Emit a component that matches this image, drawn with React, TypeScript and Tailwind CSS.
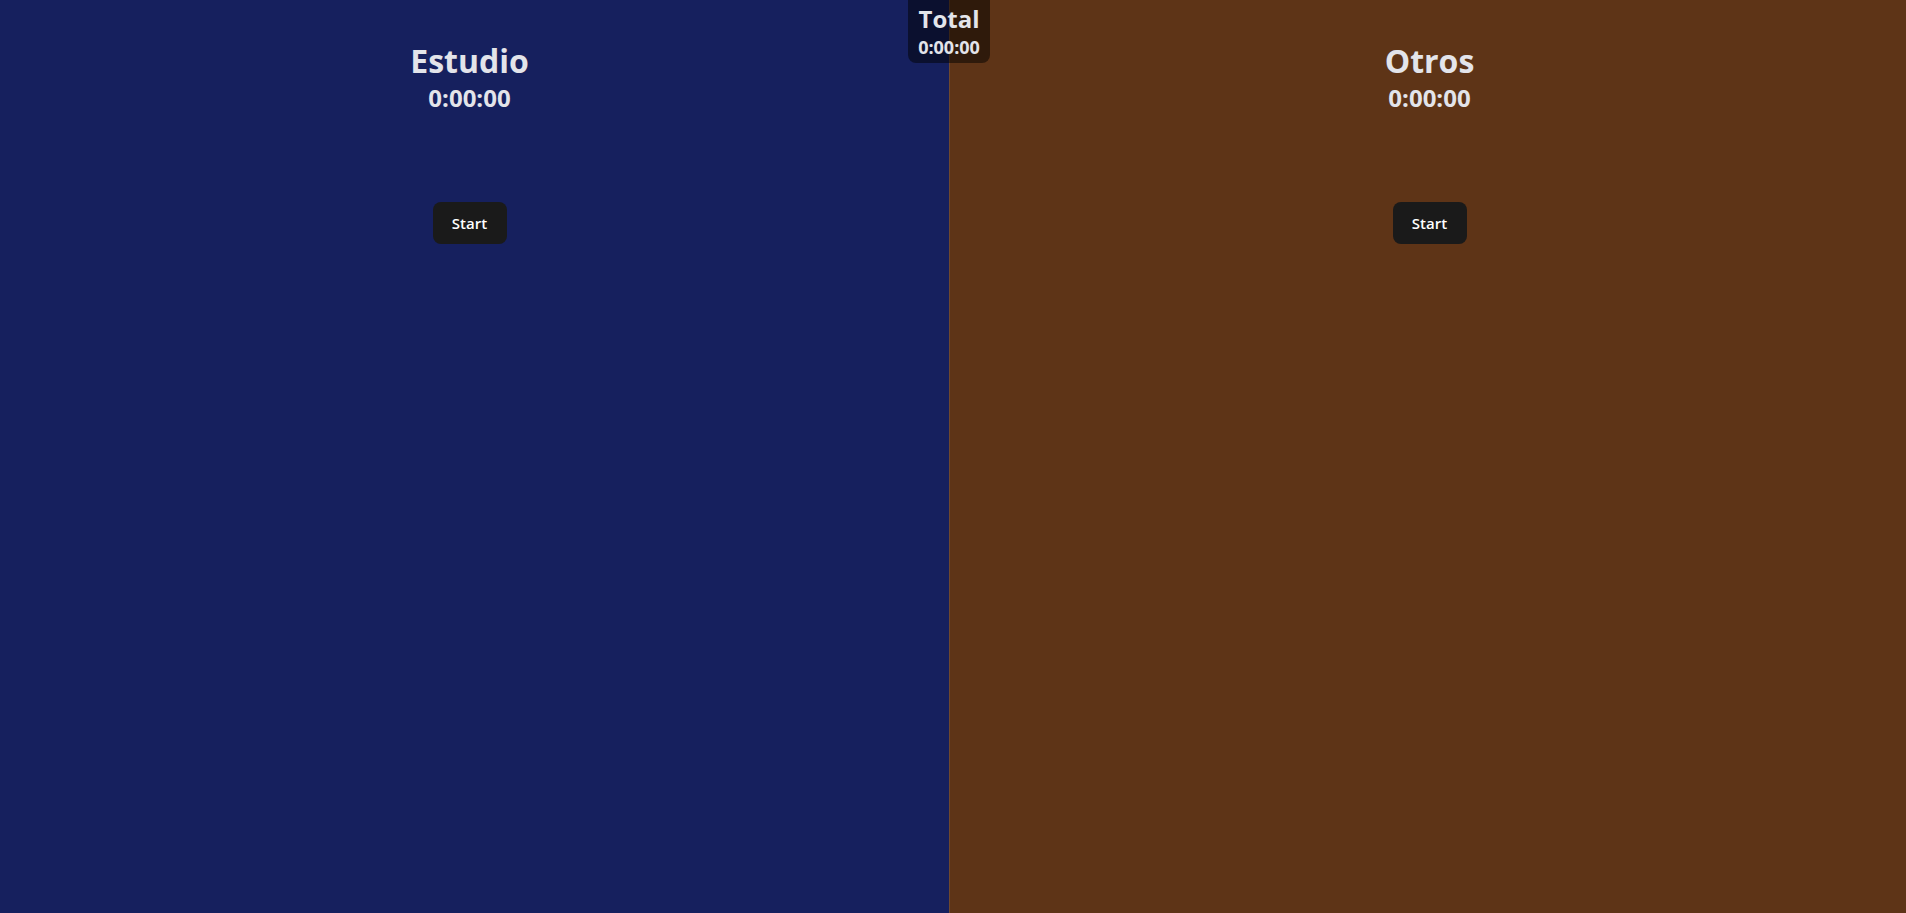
import { useEffect, useState } from "react";

const fmt = (s: number) => {
  const h = Math.floor(s / 3600);
  const m = Math.floor((s % 3600) / 60);
  const sec = s % 60;
  return `${h}:${String(m).padStart(2, "0")}:${String(sec).padStart(2, "0")}`;
};

function Panel({
  title,
  seconds,
  running,
  onToggle,
  className,
}: {
  title: string;
  seconds: number;
  running: boolean;
  onToggle: () => void;
  className: string;
}) {
  return (
    <section className={className}>
      <div className="flex flex-col items-center">
        <h1 className="text-[32px] font-bold leading-[40px]">{title}</h1>
        <h2 className="text-[24px] font-bold leading-[33px]">{fmt(seconds)}</h2>
        <button
          onClick={onToggle}
          className="mt-[88px] h-[42px] w-[74px] rounded-lg bg-[#1a1a1a] text-[15px] font-semibold text-white"
        >
          {running ? "Stop" : "Start"}
        </button>
      </div>
    </section>
  );
}

export default function App() {
  const [study, setStudy] = useState(0);
  const [other, setOther] = useState(0);
  const [active, setActive] = useState<"study" | "other" | null>(null);

  useEffect(() => {
    if (!active) return;
    const id = setInterval(() => {
      if (active === "study") setStudy((s) => s + 1);
      else setOther((s) => s + 1);
    }, 1000);
    return () => clearInterval(id);
  }, [active]);

  const toggle = (k: "study" | "other") => setActive((a) => (a === k ? null : k));

  return (
    <div className="relative flex h-screen w-full text-[#e3e4ea] [font-family:'Open_Sans',sans-serif]">
      <Panel
        title="Estudio"
        seconds={study}
        running={active === "study"}
        onToggle={() => toggle("study")}
        className="w-[949px] bg-[#16205e] pr-[10px] pt-[41px]"
      />
      <Panel
        title="Otros"
        seconds={other}
        running={active === "other"}
        onToggle={() => toggle("other")}
        className="flex-1 border-l border-white/10 bg-[#5e3417] pl-[3px] pt-[41px]"
      />
      <div className="absolute left-[908px] top-0 flex h-[63px] w-[82px] flex-col items-center rounded-b-lg bg-black/50 pt-[5px]">
        <span className="text-[24px] font-bold leading-[28px]">Total</span>
        <span className="text-[18px] font-bold leading-[29px]">{fmt(study + other)}</span>
      </div>
    </div>
  );
}
